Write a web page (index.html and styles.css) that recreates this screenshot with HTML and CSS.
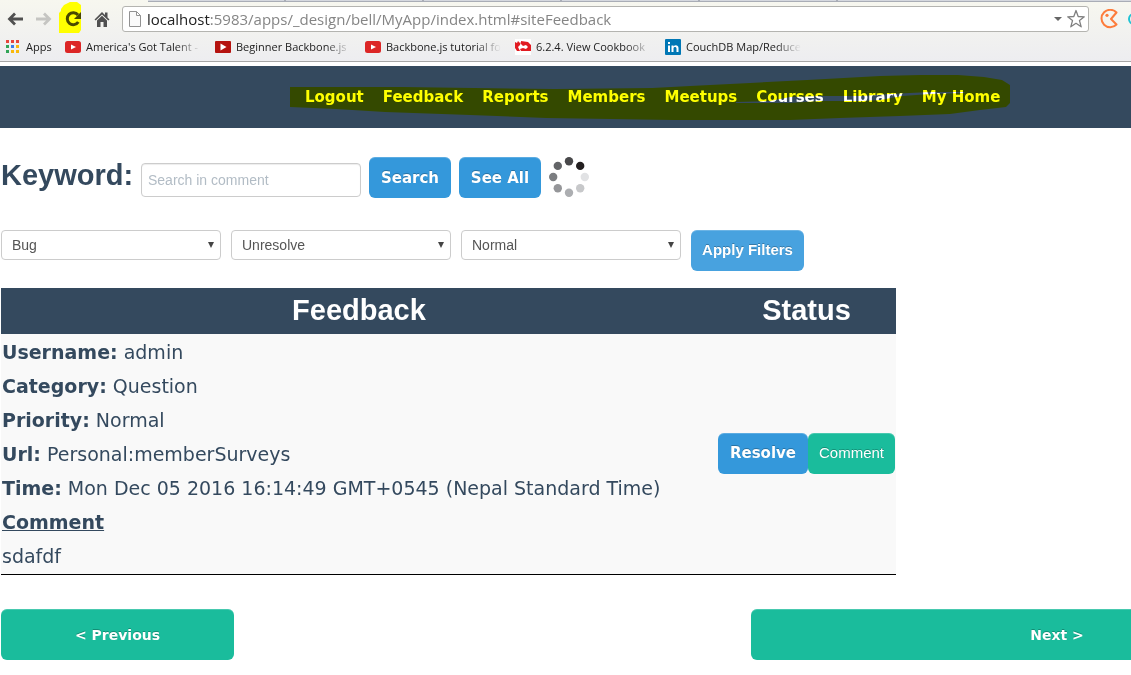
FILE: index.html
```html
<!DOCTYPE html>
<html lang="en">
<head>
<meta charset="utf-8">
<title>Site Feedback</title>
<link rel="stylesheet" href="styles.css">
</head>
<body>
<header class="browser">
  <div class="tabs"><span class="tab-edge"></span><span class="tab-edge"></span><span class="tab-edge"></span><span class="tab-edge"></span><span class="tab-edge"></span></div>
  <div class="toolbar">
    <button class="tool" aria-label="Back"><svg width="18" height="18" viewBox="0 0 18 18"><path d="M17 9H4M9 3.500L3.500 9L9 14.500" fill="none" stroke="#505050" stroke-width="2.800"/></svg></button>
    <button class="tool" aria-label="Forward"><svg width="18" height="18" viewBox="0 0 18 18"><path d="M1 9H14M9 3.500L14.500 9L9 14.500" fill="none" stroke="#c5c5c2" stroke-width="2.800"/></svg></button>
    <button class="tool reload" aria-label="Reload">
      <svg class="reload-mark" width="22" height="32" viewBox="0 0 22 32"><path d="M0 31V11L2 9V7L5 3L11 0H18L22 3V28L20 31Z" fill="#ff0"/></svg>
      <svg class="reload-icon" width="18" height="18" viewBox="0 0 18 18"><path d="M14 5A6 6 0 1 0 14.300 12" fill="none" stroke="#484800" stroke-width="3"/><path d="M17 2V9H10Z" fill="#484800"/></svg>
    </button>
    <button class="tool" aria-label="Home"><svg width="18" height="18" viewBox="0 0 18 18"><path d="M9 2L1.500 9.500L2.700 10.500L9 4.500L15.300 10.500L16.500 9.500L14.500 7.500V2.500H12V5Z" fill="#505050"/><path d="M4 10.500L9 5.800L14 10.500V17H10.500V12H7.500V17H4Z" fill="#505050"/></svg></button>
    <div class="address">
      <svg width="12" height="16" viewBox="0 0 12 16"><path d="M.5 .5H7.500L11.500 4.500V15.500H.5ZM7.500 .5V4.500H11.500" fill="#fafafa" stroke="#929292"/></svg>
      <span class="url"><span class="host">localhost</span>:5983/apps/_design/bell/MyApp/index.html#siteFeedback</span>
      <svg class="caret" width="8" height="4" viewBox="0 0 8 4"><path d="M0 0H8L4 4Z" fill="#666"/></svg>
      <svg width="20" height="20" viewBox="0 0 20 20"><path d="M10 1.500L12.200 7.500L18.300 7.800L13.500 11.600L15.200 17.800L10 14.300L4.800 17.800L6.500 11.600L1.700 7.800L7.800 7.500Z" fill="#fff" stroke="#808080" stroke-width="1.300" stroke-linejoin="round"/></svg>
    </div>
    <svg class="extension" width="20" height="20" viewBox="0 0 20 20"><path d="M18.500 3.500A8.700 8.700 0 1 0 18.500 15.500L13 10Z" fill="none" stroke="#fd7c3c" stroke-width="2" stroke-linejoin="round"/><circle cx="9" cy="6.300" r="1.600" fill="#fd7c3c"/></svg>
    <svg class="extension-cut" width="3" height="20" viewBox="0 0 3 20"><circle cx="6" cy="10" r="5" fill="none" stroke="#1fc3d4" stroke-width="2"/></svg>
  </div>
  <nav class="bookmarks" aria-label="Bookmarks">
    <a class="apps" href="#apps"><svg width="14" height="14" viewBox="0 0 14 14"><path fill="#e8453c" d="M0 0h3v3H0zM5 0h3v3H5zM10 0h3v3h-3z"/><path fill="#31a457" d="M0 5h3v3H0zM0 10h3v3H0z"/><path fill="#3b7ded" d="M5 5h3v3H5z"/><path fill="#f9b90c" d="M10 5h3v3h-3zM5 10h3v3H5zM10 10h3v3h-3z"/></svg>Apps</a>
    <a class="bookmark" href="#a"><svg width="16" height="16" viewBox="0 0 16 16"><rect y="2" width="16" height="12" rx="2.500" fill="#dc2626"/><path d="M6 5.500V10.500L11 8Z" fill="#fff"/></svg><span class="label">America's Got Talent -</span></a>
    <a class="bookmark" href="#b"><svg width="16" height="16" viewBox="0 0 16 16"><rect y="2" width="16" height="12" rx="1" fill="#b5130f"/><path d="M5.500 4.500V11.500L11.500 8Z" fill="#fff"/></svg><span class="label">Beginner Backbone.js</span></a>
    <a class="bookmark" href="#c"><svg width="16" height="16" viewBox="0 0 16 16"><rect y="2" width="16" height="12" rx="2.500" fill="#dc2626"/><path d="M6 5.500V10.500L11 8Z" fill="#fff"/></svg><span class="label">Backbone.js tutorial fo</span></a>
    <a class="bookmark" href="#d"><svg width="16" height="16" viewBox="0 0 16 16"><path fill="#fff" d="M0 0h16v16H0z"/><path d="M0 3L2 4L3 2L5 4L6 3L5 6L3 8L5 12H2L0 9Z" fill="#e11b22"/><path d="M6 2L13 3L16 6V12H6L5 10L8 9L11 10L13 8L11 6L8 7L6 5Z" fill="#e11b22"/></svg><span class="label">6.2.4. View Cookbook</span></a>
    <a class="bookmark" href="#e"><svg width="16" height="16" viewBox="0 0 16 16"><rect width="16" height="16" rx="1" fill="#0077b5"/><path d="M3 6.500h2V13H3zM3 3h2v2H3zM6.500 6.500h2v1c1.500-2 5-1.500 5 1.500v4h-2V9.500c0-2-3-2-3 0V13h-2z" fill="#fff"/></svg><span class="label">CouchDB Map/Reduce</span></a>
  </nav>
</header>

<nav class="site-nav" aria-label="Main">
  <ul class="site-links">
    <li><a href="#logout">Logout</a></li>
    <li><a href="#siteFeedback">Feedback</a></li>
    <li><a href="#reports">Reports</a></li>
    <li><a href="#members">Members</a></li>
    <li><a href="#meetups">Meetups</a></li>
    <li><a href="#courses">Courses</a></li>
    <li><a href="#library">Library</a></li>
    <li><a href="#home">My Home</a></li>
  </ul>
  <svg class="marker" width="720" height="46" viewBox="0 0 720 46"><path fill="#ff0" fill-rule="evenodd" d="M0 12H113L184 13L265 14L362 13L400 11L460 8L517 5L590 1L630 0H668L694 2L712 5L720 10V28L716 32L690 35L660 39L610 41L550 43L500 45H384L320 44L256 43L180 40L95 37L46 34L0 32ZM446 27L480 26L500 22L530 21H572L600 19L640 17L675 17L674 18L640 19L612 21L590 25L572 26L530 26L500 28L446 28Z"/></svg>
</nav>

<main class="page">
  <form class="search">
    <label class="heading" for="keyword">Keyword:</label>
    <input class="field" id="keyword" type="text" placeholder="Search in comment">
    <button class="btn blue" type="button">Search</button>
    <button class="btn blue" type="button">See All</button>
    <svg class="spinner" width="40" height="40" viewBox="0 0 40 40" role="img" aria-label="Loading"><circle cx="20" cy="4.300" r="4.200" fill="#48484a"/><circle cx="31.200" cy="8.900" r="4.200" fill="#231f20"/><circle cx="35.800" cy="20" r="4.200" fill="#e1e2e4"/><circle cx="31.200" cy="31.200" r="4.200" fill="#c7c8ca"/><circle cx="20" cy="35.800" r="4.200" fill="#acaeb1"/><circle cx="8.800" cy="31.200" r="4.200" fill="#959699"/><circle cx="4.200" cy="20" r="4.200" fill="#7c7e81"/><circle cx="8.800" cy="8.900" r="4.200" fill="#636467"/></svg>
  </form>

  <form class="filters">
    <span class="picker"><select aria-label="Category"><option>Bug</option><option>Question</option></select></span>
    <span class="picker"><select aria-label="Status"><option>Unresolve</option><option>Resolve</option></select></span>
    <span class="picker"><select aria-label="Priority"><option>Normal</option><option>Urgent</option></select></span>
    <button class="btn apply" type="button">Apply Filters</button>
  </form>

  <table class="feedback">
    <thead><tr><th>Feedback</th><th class="status">Status</th></tr></thead>
    <tbody>
      <tr>
        <td>
          <p><b>Username:</b> admin</p>
          <p><b>Category:</b> Question</p>
          <p><b>Priority:</b> Normal</p>
          <p><b>Url:</b> Personal:memberSurveys</p>
          <p><b>Time:</b> Mon Dec 05 2016 16:14:49 GMT+0545 (Nepal Standard Time)</p>
          <p><b><u>Comment</u></b></p>
          <p>sdafdf</p>
        </td>
        <td class="status"><div class="actions"><button class="btn blue resolve" type="button">Resolve</button><button class="btn green comment" type="button">Comment</button></div></td>
      </tr>
    </tbody>
  </table>

  <div class="pager">
    <button class="btn green previous" type="button">&lt; Previous</button>
    <button class="btn green next" type="button">Next &gt;</button>
  </div>
</main>
</body>
</html>
```
FILE: styles.css
```css
* { box-sizing: border-box; }

body {
  margin: 0;
  background: #fff;
  color: #34495e;
  font-family: "DejaVu Sans", Verdana, sans-serif;
}

a { color: inherit; text-decoration: none; }
svg { display: block; flex: none; }
p { margin: 0; }

/* Browser bar */
.browser {
  height: 62px;
  margin-bottom: 4px;
  border-bottom: 1px solid #a6a6a6;
  background: linear-gradient(#f7f7ef, #ededf0);
  font-family: "Open Sans", "Noto Sans", sans-serif;
  overflow: hidden;
}

.tabs {
  display: flex;
  height: 2px;
  margin-left: 148px;
  border-bottom: 1px solid #a9adb6;
  background: #d5d8df;
}
.tab-edge { width: 138px; border-right: 2px solid #a9adb6; }

.toolbar {
  display: flex;
  align-items: center;
  height: 34px;
  padding-left: 6px;
}
.tool {
  width: 18px;
  height: 18px;
  margin-right: 11px;
  padding: 0;
  border: 0;
  background: none;
}
.reload { position: relative; }
.reload-icon { position: relative; }
.reload-mark { position: absolute; left: -5px; top: -8px; }

.address {
  display: flex;
  flex: 1;
  align-items: center;
  height: 26px;
  padding: 0 2px 0 6px;
  border: 1px solid #b4b4b0;
  border-radius: 3px;
  background: #fff;
}
.url { flex: 1; padding-left: 6px; color: #858585; font-size: 15px; line-height: 24px; white-space: nowrap; }
.host { color: #222; }
.caret { margin-right: 4px; }
.extension { margin: 0 10px 0 9px; }

.bookmarks {
  display: flex;
  align-items: center;
  gap: 14px;
  height: 18px;
  margin-top: 2px;
  padding-left: 6px;
  color: #222;
  font-size: 11px;
  line-height: 18px;
}
.apps, .bookmark { display: flex; align-items: center; }
.apps { gap: 6px; width: 45px; }
.bookmark { gap: 5px; width: 136px; }
.label {
  flex: 1;
  white-space: nowrap;
  -webkit-mask-image: linear-gradient(to right, #000 78%, transparent);
  mask-image: linear-gradient(to right, #000 78%, transparent);
}

/* Site navigation */
.site-nav {
  position: relative;
  height: 62px;
  padding: 1px 0 0 305px;
  background: #34495e;
}
.site-links {
  display: flex;
  gap: 19px;
  margin: 0;
  padding: 0;
  list-style: none;
  color: #fff;
  font-size: 15px;
  font-weight: bold;
  line-height: 61px;
  white-space: nowrap;
}
.marker {
  position: absolute;
  left: 290px;
  top: 9px;
  mix-blend-mode: multiply;
  pointer-events: none;
}

/* Controls */
.page { padding: 29px 0 15px 1px; overflow: hidden; }

.btn {
  height: 41px;
  padding: 0 12px;
  border: 0;
  border-radius: 6px;
  color: #fff;
  font-family: "DejaVu Sans", Verdana, sans-serif;
  font-size: 15px;
  font-weight: bold;
  text-shadow: 0 -1px 0 rgba(0, 0, 0, 0.25);
  box-shadow: inset 0 1px 0 rgba(255, 255, 255, 0.2);
  white-space: nowrap;
}
.blue { background-color: #3498db; }
.green { background-color: #1abc9c; }

.search { display: flex; gap: 8px; }
.heading {
  width: 132px;
  font-family: "Liberation Sans", Arial, sans-serif;
  font-size: 29px;
  font-weight: bold;
  line-height: 36px;
}
.field {
  width: 220px;
  height: 34px;
  margin-top: 6px;
  padding: 0 6px;
  border: 1px solid #ccc;
  border-radius: 4px;
  box-shadow: inset 0 1px 1px rgba(0, 0, 0, 0.075);
  color: #555;
  font-family: "Liberation Sans", Arial, sans-serif;
  font-size: 14px;
}
.field::placeholder { color: #b2bcc5; }
.search .btn { width: 82px; padding: 0; }

.filters { display: flex; gap: 10px; margin-top: 32px; }
.picker { position: relative; width: 220px; height: 30px; }
.picker::after {
  content: "";
  position: absolute;
  top: 12px;
  right: 7px;
  border-top: 6px solid #444;
  border-left: 3px solid transparent;
  border-right: 3px solid transparent;
  pointer-events: none;
}
.picker select {
  appearance: none;
  width: 100%;
  height: 100%;
  padding: 0 10px;
  border: 1px solid #ccc;
  border-radius: 4px;
  background: #fff;
  color: #555;
  font-family: "Liberation Sans", Arial, sans-serif;
  font-size: 14px;
}
.apply {
  width: 113px;
  padding: 0 0 2px;
  background-color: #48a2df;
  font-family: "Liberation Sans", Arial, sans-serif;
  font-size: 15px;
}

/* Feedback table */
.feedback {
  width: 895px;
  max-width: 100%;
  margin-top: 17px;
  border-collapse: collapse;
  background: #f9f9f9;
}
.feedback th {
  height: 46px;
  padding: 0 0 2px;
  background: #34495e;
  color: #fff;
  font-family: "Liberation Sans", Arial, sans-serif;
  font-size: 29px;
  line-height: 40px;
}
.feedback td {
  padding: 1px;
  border-bottom: 1px solid #000;
  font-size: 19px;
  line-height: 34px;
}
.feedback .status { width: 179px; }
.actions { display: flex; padding-bottom: 2px; }
.resolve { width: 90px; padding: 0; }
.comment {
  width: 87px;
  padding: 0 0 2px;
  font-family: "Liberation Sans", Arial, sans-serif;
  font-weight: normal;
}

/* Paging */
.pager { display: flex; gap: 517px; margin-top: 34px; }
.pager .btn { flex: none; height: 51px; font-size: 14px; }
.previous { width: 233px; }
.next { width: 612px; }
```
